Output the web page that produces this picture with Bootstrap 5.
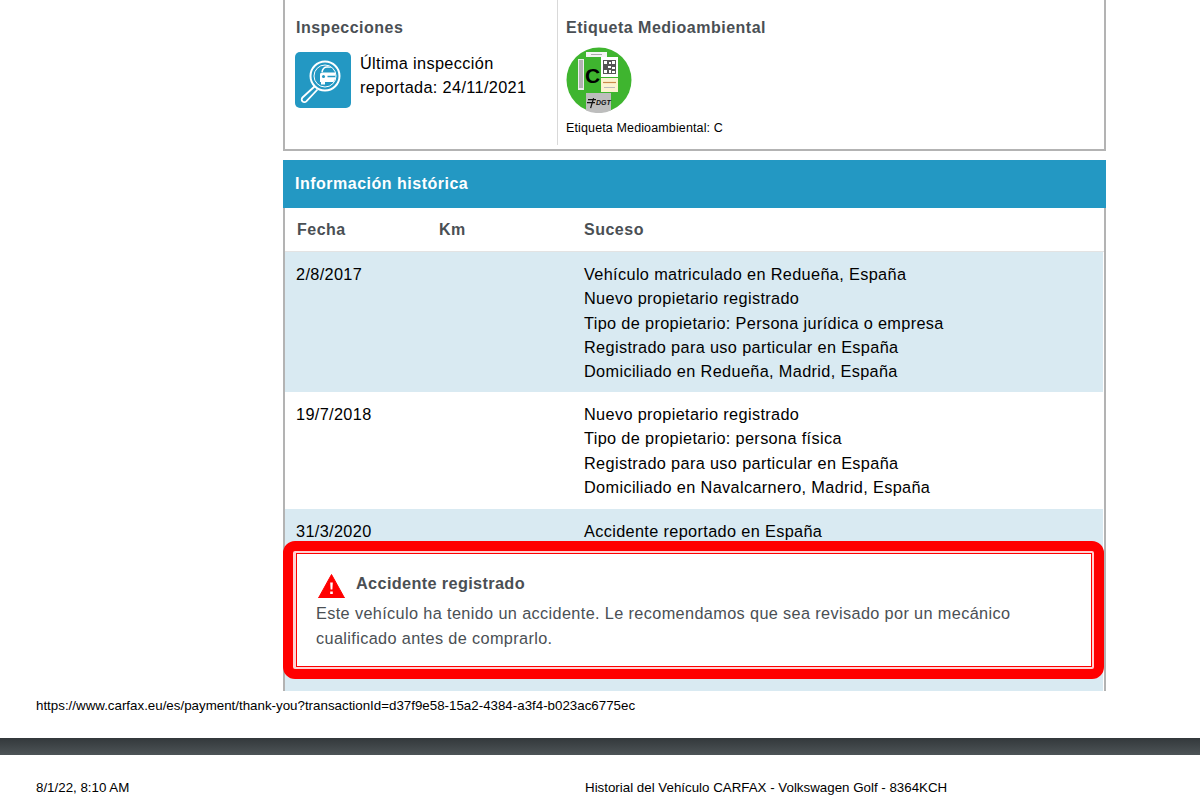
<!DOCTYPE html>
<html lang="es">
<head>
    <meta charset="UTF-8">
    <meta name="viewport" content="width=device-width, initial-scale=1.0">
    <title>Historial del Vehículo CARFAX</title>
    <link href="https://cdn.jsdelivr.net/npm/bootstrap@5.3.0/dist/css/bootstrap.min.css" rel="stylesheet">
    <style>
        html, body {
            height: 800px;
            overflow: hidden;
        }
        body {
            background-color: #fff;
            color: #000;
            font-family: "Liberation Sans", Arial, sans-serif;
        }
        .sheet {
            width: 823px;
            height: 691px;
            margin-left: 283px;
            position: relative;
            overflow: hidden;
        }
        .top-box {
            height: 151px;
            border: 2px solid #b3b3b3;
            border-top: 0;
        }
        .top-left {
            width: 272px;
            padding: 18px 0 0 10px;
        }
        .top-left .box-title {
            margin-left: 1px;
        }
        .top-right {
            border-left: 1px solid #d9d9d9;
            padding: 18px 0 0 8px;
            margin-bottom: 4px;
        }
        .box-title {
            font-size: 16px;
            font-weight: 700;
            color: #4a4f54;
            letter-spacing: .5px;
            line-height: 20px;
            margin: 0;
        }
        .insp-icon {
            width: 56px;
            height: 56px;
            flex: none;
        }
        .insp-row {
            margin-top: 14px;
            gap: 9px;
        }
        .insp-text {
            font-size: 16.3px;
            line-height: 24.3px;
            letter-spacing: .35px;
            margin-top: -1px;
        }
        .label-img {
            display: block;
            width: 66px;
            height: 66px;
            margin-top: 9px;
        }
        .label-cap {
            font-size: 12.5px;
            line-height: 16px;
            margin-top: 7px;
            letter-spacing: .13px;
        }
        .hist-head {
            height: 48px;
            margin-top: 9px;
            background-color: #2398c3;
            color: #fff;
            font-size: 16px;
            font-weight: 700;
            line-height: 48px;
            padding-left: 12px;
            letter-spacing: .5px;
        }
        .hist-body {
            border-left: 2px solid #b3b3b3;
            border-right: 2px solid #b3b3b3;
            height: 483px;
        }
        .hist-cols {
            height: 44px;
            border-bottom: 1px solid #e3e3e3;
            font-size: 16px;
            font-weight: 700;
            color: #4a4f54;
            letter-spacing: .5px;
            align-items: center;
        }
        .col-date {
            width: 154px;
            padding-left: 11px;
            flex: none;
        }
        .hist-cols .col-date {
            padding-left: 12px;
        }
        .col-km {
            width: 145px;
            flex: none;
        }
        .hist-row {
            font-size: 16.3px;
            line-height: 24.3px;
            letter-spacing: .35px;
            margin-right: 1px;
        }
        .hist-row .col-date {
            width: 299px;
        }
        .row-blue {
            background-color: #d9eaf2;
        }
        .row-a { height: 140px; padding-top: 10px; }
        .row-b { height: 117px; padding-top: 10px; }
        .row-c { height: 182px; padding-top: 10px; }
        .alert-box {
            position: absolute;
            left: 0;
            top: 541px;
            width: 821px;
            height: 138px;
            border: 10px solid #f00;
            border-radius: 12px;
            padding: 2px 2px 2px 3px;
            background-color: #ffd2d2;
        }
        .alert-inner {
            height: 100%;
            border: 1px solid #f00;
            background-color: #fff;
            padding: 17px 0 0 19px;
            color: #4a4f54;
        }
        .alert-title {
            height: 24px;
            font-size: 16.3px;
            font-weight: 700;
            letter-spacing: .35px;
            line-height: 24px;
            gap: 11px;
        }
        .alert-title svg {
            margin: 3px 0 0 2px;
            flex: none;
        }
        .alert-text {
            font-size: 16.3px;
            line-height: 25px;
            letter-spacing: .36px;
            margin: 6px 0 0 0;
            width: 730px;
        }
        .page-url {
            font-size: 13.33px;
            line-height: 16px;
            padding: 7px 0 0 36px;
        }
        .page-bar {
            height: 17px;
            margin-top: 24px;
            background: linear-gradient(#33383b, #4d5457);
        }
        .page-foot {
            font-size: 13.33px;
            line-height: 16px;
            padding: 25px 0 0 36px;
        }
        .foot-date {
            width: 549px;
        }
    </style>
</head>
<body>
<div class="sheet">
    <div class="top-box d-flex">
        <div class="top-left">
            <h2 class="box-title">Inspecciones</h2>
            <div class="insp-row d-flex">
                <svg class="insp-icon" viewBox="0 0 56 56">
                    <defs>
                        <clipPath id="lensClip"><circle cx="30" cy="24" r="10.5"/></clipPath>
                    </defs>
                    <rect width="56" height="56" rx="5" fill="#2398c3"/>
                    <g fill="none" stroke="#fff">
                        <circle cx="30" cy="24" r="14.5" stroke-width="2"/>
                        <circle cx="30" cy="24" r="11" stroke-width="1"/>
                        <path d="M19.5 34.5 L7.5 45.5 a2.6 2.6 0 0 0 3.8 3.8 L22.5 37.5" stroke-width="1.8"/>
                    </g>
                    <g clip-path="url(#lensClip)">
                        <path d="M27 20 q1 -5 5 -5 h10" fill="none" stroke="#fff" stroke-width="1.600"/>
                        <path d="M27 20.500 a2 2 0 0 0 -2 2 v7.500 h1 v2.500 h4 v-2.500 h12 v-9.500 z" fill="#fff"/>
                        <circle cx="28.500" cy="24.500" r="1.500" fill="#2398c3"/>
                        <path d="M32.500 24.500 h8" stroke="#2398c3" stroke-width="1.400"/>
                    </g>
                </svg>
                <div class="insp-text">Última inspección<br>reportada: 24/11/2021</div>
            </div>
        </div>
        <div class="top-right flex-grow-1">
            <h2 class="box-title">Etiqueta Medioambiental</h2>
            <svg class="label-img" viewBox="0 0 66 66">
                <circle cx="33" cy="33" r="32.500" fill="#3fb52f"/>
                <rect x="20" y="5" width="21" height="5" fill="#f4f4f4"/>
                <path d="M25 7.500h11" stroke="#aaa" stroke-width="1"/>
                <rect x="12" y="12" width="6" height="31" fill="#eee"/>
                <path d="M13 14h4M13 16h4M13 18h4M13 20h4M13 22h4M13 24h4M13 26h4M13 28h4M13 30h4M13 32h4M13 34h4M13 36h4M13 38h4M13 40h4" stroke="#777" stroke-width="1"/>
                <rect x="35" y="10" width="17" height="20" fill="#fff"/>
                <rect x="37" y="13" width="13" height="14" fill="#555"/>
                <path d="M38 14h3v3h-3zM46 14h3v3h-3zM38 23h3v3h-3zM43 15h2v2h-2zM42 19h3v2h-3zM46 20h3v2h-3zM43 23h2v3h-2zM46 24h3v2h-3z" fill="#fff"/>
                <rect x="35" y="31" width="17" height="14" fill="#fbf3d0"/>
                <path d="M37 35.500h13" stroke="#c98a4a" stroke-width="1.200"/>
                <path d="M38 40.500h11" stroke="#bbb" stroke-width="1"/>
                <path d="M20 46 h25 v17.500 a32.500 32.500 0 0 1 -25 0z" fill="#bdbdbd"/>
                <path d="M22 52 h8 v1.300 h-8z M21 55 h8 v1.300 h-8z M24 61 l3 -10 1.200 .3 -3 10z" fill="#111"/>
                <text x="30" y="58" font-family="Liberation Sans" font-size="7" font-weight="700" font-style="italic" fill="#111">DGT</text>
                <text x="19" y="36" font-family="Liberation Sans" font-size="21" font-weight="700" fill="#000">C</text>
            </svg>
            <div class="label-cap">Etiqueta Medioambiental: C</div>
        </div>
    </div>
    <div class="hist-head">Información histórica</div>
    <div class="hist-body">
        <div class="hist-cols d-flex">
            <div class="col-date">Fecha</div>
            <div class="col-km">Km</div>
            <div>Suceso</div>
        </div>
        <div class="hist-row row-blue row-a d-flex">
            <div class="col-date">2/8/2017</div>
            <div>Vehículo matriculado en Redueña, España<br>Nuevo propietario registrado<br>Tipo de propietario: Persona jurídica o empresa<br>Registrado para uso particular en España<br>Domiciliado en Redueña, Madrid, España</div>
        </div>
        <div class="hist-row row-b d-flex">
            <div class="col-date">19/7/2018</div>
            <div>Nuevo propietario registrado<br>Tipo de propietario: persona física<br>Registrado para uso particular en España<br>Domiciliado en Navalcarnero, Madrid, España</div>
        </div>
        <div class="hist-row row-blue row-c d-flex">
            <div class="col-date">31/3/2020</div>
            <div>Accidente reportado en España</div>
        </div>
    </div>
    <div class="alert-box">
        <div class="alert-inner">
            <div class="alert-title d-flex">
                <svg width="27" height="24" viewBox="0 0 27 24">
                    <path d="M13.500 .5 L26.500 24 H.5 Z" fill="#f00" stroke="#f00" stroke-linejoin="round"/>
                    <path d="M12.200 8.500 h2.600 l-.4 7 h-1.800z M12.200 17.500 h2.600 v2.600 h-2.600z" fill="#fff"/>
                </svg>
                <span>Accidente registrado</span>
            </div>
            <p class="alert-text">Este vehículo ha tenido un accidente. Le recomendamos que sea revisado por un mecánico cualificado antes de comprarlo.</p>
        </div>
    </div>
</div>
<div class="page-url">https://www.carfax.eu/es/payment/thank-you?transactionId=d37f9e58-15a2-4384-a3f4-b023ac6775ec</div>
<div class="page-bar"></div>
<div class="page-foot d-flex">
    <div class="foot-date">8/1/22, 8:10 AM</div>
    <div>Historial del Vehículo CARFAX - Volkswagen Golf - 8364KCH</div>
</div>
<script src="https://cdn.jsdelivr.net/npm/bootstrap@5.3.0/dist/js/bootstrap.bundle.min.js"></script>
</body>
</html>
